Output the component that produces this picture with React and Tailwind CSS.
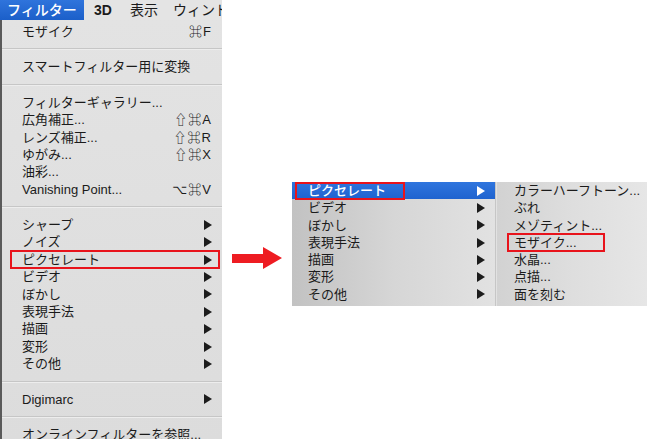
const font = { fontFamily: '"Liberation Sans", "Noto Sans CJK JP", "DejaVu Sans", sans-serif' };

function Tri({ white }) {
  return (
    <svg width="8" height="10" viewBox="0 0 8 10" className="shrink-0">
      <polygon points="0,0 8,5 0,10" fill={white ? "#ffffff" : "#1c1c1c"} />
    </svg>
  );
}

function Row({ label, keys, sub, boxed }) {
  return (
    <div className="relative h-[17.4px] flex items-center pl-[20px] pr-[10px] text-[13px] text-[#1b1b1b]">
      <span className="flex-1 whitespace-nowrap">{label}</span>
      {keys && <span className="whitespace-nowrap tracking-[1px]">{keys}</span>}
      {sub && <Tri />}
      {boxed && <div className="absolute left-[8px] right-[2px] top-[-1px] bottom-[-1px] border-2 border-[#e8131b]" />}
    </div>
  );
}

function Sep() {
  return (
    <div className="h-[18px] flex items-center">
      <div className="w-full h-[2px] bg-[#c6c6c6] border-b border-[#ededed]" />
    </div>
  );
}

export default function App() {
  const subLeft = ["ピクセレート", "ビデオ", "ぼかし", "表現手法", "描画", "変形", "その他"];
  const subRight = ["カラーハーフトーン...", "ぶれ", "メゾティント...", "モザイク...", "水晶...", "点描...", "面を刻む"];

  return (
    <div className="w-[647px] h-[439px] bg-white flex items-start overflow-hidden" style={font}>
      {/* main filter menu */}
      <div className="w-[222px] h-[439px] shrink-0 flex flex-col overflow-hidden">
        <div className="h-[20px] shrink-0 flex items-center bg-[#e4e4e4] text-[14px] text-[#1b1b1b] whitespace-nowrap overflow-hidden">
          <div className="h-full w-[84px] shrink-0 bg-gradient-to-b from-[#2f74dc] to-[#1b5fc9] text-white flex items-center pl-[7px] font-medium">フィルター</div>
          <span className="ml-[10px] shrink-0 font-bold">3D</span>
          <span className="ml-[18px] shrink-0">表示</span>
          <span className="ml-[15px] shrink-0">ウィンドウ</span>
        </div>
        <div className="flex-1 pt-[3px] bg-gradient-to-b from-[#e3e3e3] to-[#dcdcdc] border-l-2 border-[#5a5a5a]">
          <Row label="モザイク" keys="⌘F" />
          <Sep />
          <Row label="スマートフィルター用に変換" />
          <Sep />
          <Row label="フィルターギャラリー..." />
          <Row label="広角補正..." keys="⇧⌘A" />
          <Row label="レンズ補正..." keys="⇧⌘R" />
          <Row label="ゆがみ..." keys="⇧⌘X" />
          <Row label="油彩..." />
          <Row label="Vanishing Point..." keys="⌥⌘V" />
          <Sep />
          <Row label="シャープ" sub />
          <Row label="ノイズ" sub />
          <Row label="ピクセレート" sub boxed />
          <Row label="ビデオ" sub />
          <Row label="ぼかし" sub />
          <Row label="表現手法" sub />
          <Row label="描画" sub />
          <Row label="変形" sub />
          <Row label="その他" sub />
          <Sep />
          <Row label="Digimarc" sub />
          <Sep />
          <Row label="オンラインフィルターを参照..." />
        </div>
      </div>

      {/* red arrow */}
      <svg width="52" height="24" viewBox="0 0 52 24" className="mt-[247px] ml-[10px] shrink-0">
        <polygon points="0,7 31,7 31,0 50,11 31,22 31,16 0,16" fill="#ee1c22" />
      </svg>

      {/* submenu */}
      <div className="mt-[182px] ml-[8px] h-[124px] flex-1 flex text-[13px] text-[#1b1b1b]">
        <div className="w-[203px] flex flex-col bg-gradient-to-r from-[#c2c2c2] via-[#d6d6d6] to-[#e2e2e2]">
          {subLeft.map((t, i) => (
            <div
              key={t}
              className={
                "relative h-[17.3px] flex items-center pl-[16px] pr-[10px] " +
                (i === 0 ? "bg-gradient-to-b from-[#2f75de] to-[#1f63cf] text-white font-medium" : "")
              }
            >
              <span className="flex-1 whitespace-nowrap">{t}</span>
              <Tri white={i === 0} />
              {i === 0 && <div className="absolute left-[3px] w-[110px] top-0 bottom-[-1px] border-2 border-[#e8131b]" />}
            </div>
          ))}
        </div>
        <div className="w-[2px] bg-gradient-to-r from-[#b8b8b8] to-[#f0f0f0]" />
        <div className="flex-1 flex flex-col bg-gradient-to-r from-[#d2d2d2] via-[#dedede] to-[#e6e6e6]">
          {subRight.map((t, i) => (
            <div key={t} className="relative h-[17.3px] flex items-center pl-[17px] whitespace-nowrap">
              {t}
              {i === 3 && <div className="absolute left-[10px] w-[98px] top-[-1px] bottom-[-1px] border-2 border-[#e8131b]" />}
            </div>
          ))}
        </div>
      </div>
    </div>
  );
}
